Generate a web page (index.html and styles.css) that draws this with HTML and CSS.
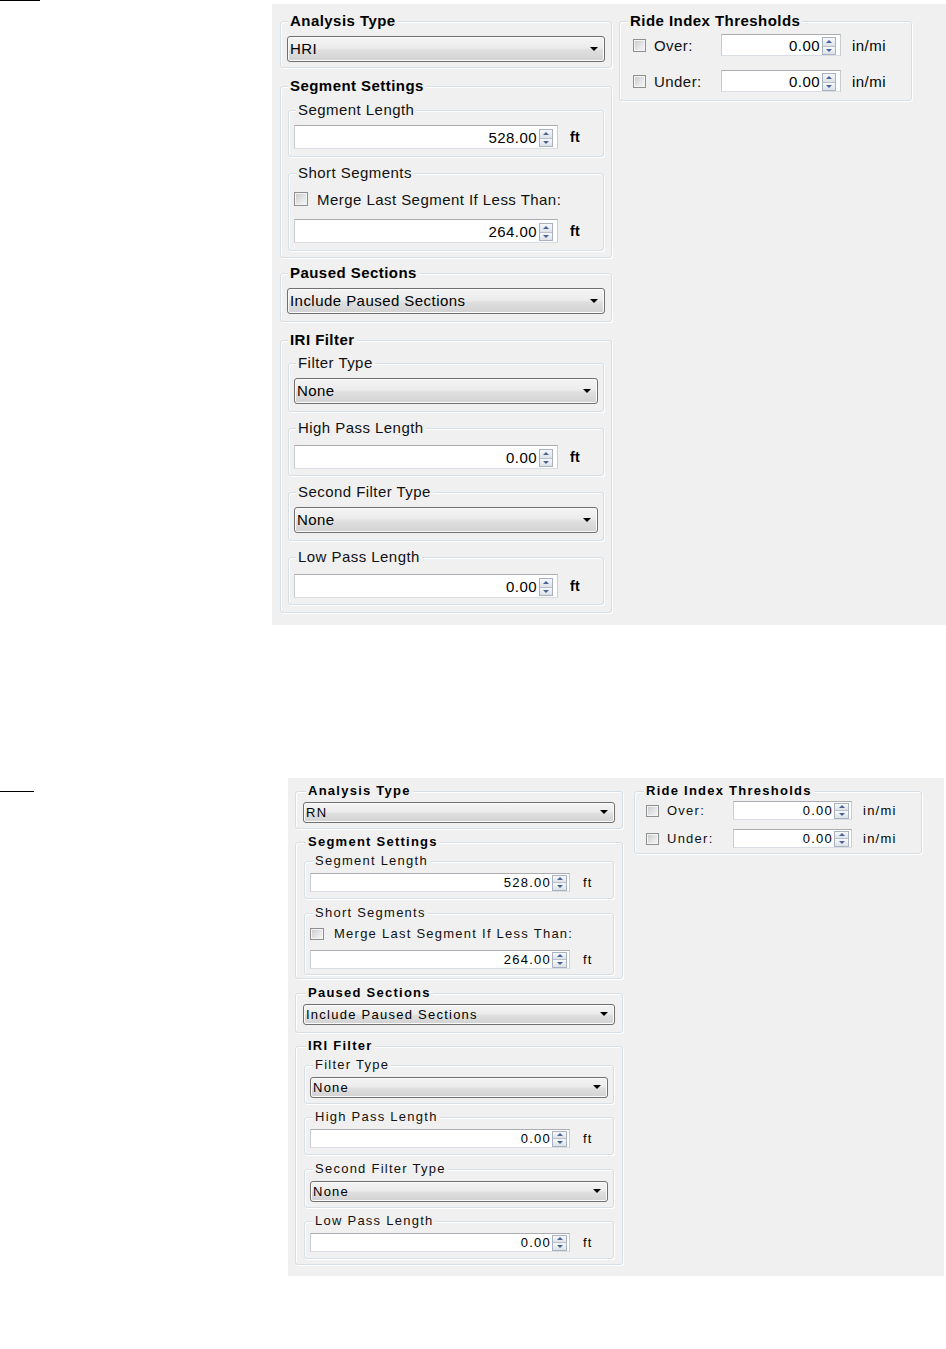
FILE: index.html
```html
<!DOCTYPE html>
<html>
<head>
<meta charset="utf-8">
<title>Analysis Settings</title>
<link rel="stylesheet" href="styles.css">
</head>
<body>

<div class="fig fig-a">
  <div class="rule"></div>
  <div class="panel">
    <div class="col col-left">
      <fieldset class="grp grp-analysis">
        <legend class="lg lg-bold">Analysis Type</legend>
        <div class="combo"><span class="combo-text">HRI</span><span class="caret"></span></div>
      </fieldset>

      <fieldset class="grp grp-segment">
        <legend class="lg lg-bold">Segment Settings</legend>
        <fieldset class="sub sub-num">
          <legend class="lg">Segment Length</legend>
          <div class="numrow">
            <div class="num"><span class="num-val">528.00</span><span class="spin"><span class="sb up"></span><span class="sb dn"></span></span></div>
            <span class="unit">ft</span>
          </div>
        </fieldset>
        <fieldset class="sub sub-short">
          <legend class="lg">Short Segments</legend>
          <div class="chkrow"><span class="box"></span><span class="chk-label">Merge Last Segment If Less Than:</span></div>
          <div class="numrow">
            <div class="num"><span class="num-val">264.00</span><span class="spin"><span class="sb up"></span><span class="sb dn"></span></span></div>
            <span class="unit">ft</span>
          </div>
        </fieldset>
      </fieldset>

      <fieldset class="grp grp-paused">
        <legend class="lg lg-bold">Paused Sections</legend>
        <div class="combo"><span class="combo-text">Include Paused Sections</span><span class="caret"></span></div>
      </fieldset>

      <fieldset class="grp grp-iri">
        <legend class="lg lg-bold">IRI Filter</legend>
        <fieldset class="sub sub-combo">
          <legend class="lg">Filter Type</legend>
          <div class="combo"><span class="combo-text">None</span><span class="caret"></span></div>
        </fieldset>
        <fieldset class="sub sub-num">
          <legend class="lg">High Pass Length</legend>
          <div class="numrow">
            <div class="num"><span class="num-val">0.00</span><span class="spin"><span class="sb up"></span><span class="sb dn"></span></span></div>
            <span class="unit">ft</span>
          </div>
        </fieldset>
        <fieldset class="sub sub-combo">
          <legend class="lg">Second Filter Type</legend>
          <div class="combo"><span class="combo-text">None</span><span class="caret"></span></div>
        </fieldset>
        <fieldset class="sub sub-num">
          <legend class="lg">Low Pass Length</legend>
          <div class="numrow">
            <div class="num"><span class="num-val">0.00</span><span class="spin"><span class="sb up"></span><span class="sb dn"></span></span></div>
            <span class="unit">ft</span>
          </div>
        </fieldset>
      </fieldset>
    </div>

    <div class="col col-right">
      <fieldset class="grp grp-ride">
        <legend class="lg lg-bold">Ride Index Thresholds</legend>
        <div class="trow">
          <span class="box"></span><span class="tlabel">Over:</span>
          <div class="num num-t"><span class="num-val">0.00</span><span class="spin"><span class="sb up"></span><span class="sb dn"></span></span></div>
          <span class="unit unit-t">in/mi</span>
        </div>
        <div class="trow">
          <span class="box"></span><span class="tlabel">Under:</span>
          <div class="num num-t"><span class="num-val">0.00</span><span class="spin"><span class="sb up"></span><span class="sb dn"></span></span></div>
          <span class="unit unit-t">in/mi</span>
        </div>
      </fieldset>
    </div>
  </div>
</div>

<div class="fig fig-b">
  <div class="rule"></div>
  <div class="panel">
    <div class="col col-left">
      <fieldset class="grp grp-analysis">
        <legend class="lg lg-bold">Analysis Type</legend>
        <div class="combo"><span class="combo-text">RN</span><span class="caret"></span></div>
      </fieldset>

      <fieldset class="grp grp-segment">
        <legend class="lg lg-bold">Segment Settings</legend>
        <fieldset class="sub sub-num sub-seglen">
          <legend class="lg">Segment Length</legend>
          <div class="numrow">
            <div class="num"><span class="num-val">528.00</span><span class="spin"><span class="sb up"></span><span class="sb dn"></span></span></div>
            <span class="unit">ft</span>
          </div>
        </fieldset>
        <fieldset class="sub sub-short">
          <legend class="lg">Short Segments</legend>
          <div class="chkrow"><span class="box"></span><span class="chk-label">Merge Last Segment If Less Than:</span></div>
          <div class="numrow">
            <div class="num"><span class="num-val">264.00</span><span class="spin"><span class="sb up"></span><span class="sb dn"></span></span></div>
            <span class="unit">ft</span>
          </div>
        </fieldset>
      </fieldset>

      <fieldset class="grp grp-paused">
        <legend class="lg lg-bold">Paused Sections</legend>
        <div class="combo"><span class="combo-text">Include Paused Sections</span><span class="caret"></span></div>
      </fieldset>

      <fieldset class="grp grp-iri">
        <legend class="lg lg-bold">IRI Filter</legend>
        <fieldset class="sub sub-combo">
          <legend class="lg">Filter Type</legend>
          <div class="combo"><span class="combo-text">None</span><span class="caret"></span></div>
        </fieldset>
        <fieldset class="sub sub-num">
          <legend class="lg">High Pass Length</legend>
          <div class="numrow">
            <div class="num"><span class="num-val">0.00</span><span class="spin"><span class="sb up"></span><span class="sb dn"></span></span></div>
            <span class="unit">ft</span>
          </div>
        </fieldset>
        <fieldset class="sub sub-combo">
          <legend class="lg">Second Filter Type</legend>
          <div class="combo"><span class="combo-text">None</span><span class="caret"></span></div>
        </fieldset>
        <fieldset class="sub sub-num">
          <legend class="lg">Low Pass Length</legend>
          <div class="numrow">
            <div class="num"><span class="num-val">0.00</span><span class="spin"><span class="sb up"></span><span class="sb dn"></span></span></div>
            <span class="unit">ft</span>
          </div>
        </fieldset>
      </fieldset>
    </div>

    <div class="col col-right">
      <fieldset class="grp grp-ride">
        <legend class="lg lg-bold">Ride Index Thresholds</legend>
        <div class="trow">
          <span class="box"></span><span class="tlabel">Over:</span>
          <div class="num num-t"><span class="num-val">0.00</span><span class="spin"><span class="sb up"></span><span class="sb dn"></span></span></div>
          <span class="unit unit-t">in/mi</span>
        </div>
        <div class="trow">
          <span class="box"></span><span class="tlabel">Under:</span>
          <div class="num num-t"><span class="num-val">0.00</span><span class="spin"><span class="sb up"></span><span class="sb dn"></span></span></div>
          <span class="unit unit-t">in/mi</span>
        </div>
      </fieldset>
    </div>
  </div>
</div>

</body>
</html>
```

FILE: styles.css
```css
* { box-sizing: border-box; }

html, body {
  margin: 0;
  padding: 0;
  background: #ffffff;
}

body {
  font-family: "Liberation Sans", Arial, sans-serif;
  color: #000;
}

/* ---------- figures ---------- */
.fig {
  display: flex;
  align-items: flex-start;
}

.rule {
  flex: none;
  height: 1px;
  background: #000;
}

.fig-a .rule { width: 40px; }

.fig-b { margin-top: 153px; }
.fig-b .rule { width: 34px; margin-top: 13px; }

/* ---------- panel ---------- */
.panel {
  flex: none;
  display: flex;
  align-items: flex-start;
  background: #f0f0f0;
}

.fig-a .panel {
  margin-left: 232px;
  margin-top: 4px;
  width: 674px;
  height: 621px;
  padding: 8px 0 0 8px;
  gap: 7px;
  --fs: 15px;
  --ls: 0.45px;
  --lh: 18px;
  --combo-h: 26px;
  --num-h: 24px;
}

.fig-b .panel {
  margin-left: 254px;
  width: 656px;
  height: 498px;
  padding: 6px 0 0 7px;
  gap: 11px;
  --fs: 13px;
  --ls: 1.25px;
  --lh: 14px;
  --combo-h: 21px;
  --num-h: 19px;
}

.col { flex: none; }
.fig-a .col-left { width: 332px; }
.fig-a .col-right { width: 293px; }
.fig-b .col-left { width: 328px; }
.fig-b .col-right { width: 288px; }

/* ---------- group boxes ---------- */
.grp, .sub {
  min-width: 0;
  margin: 0;
  border: 1px solid #d5dfe5;
  border-radius: 3px;
  box-shadow: inset 1px 1px 0 #ffffff, 1px 1px 0 #ffffff;
}

.lg {
  padding: 0 2px;
  font-size: var(--fs);
  letter-spacing: var(--ls);
  line-height: var(--lh);
  font-weight: normal;
  color: #111;
  background: #f0f0f0;
  white-space: nowrap;
}

.lg-bold { font-weight: bold; color: #000; }

/* top panel metrics */
.fig-a .grp { padding: 6px 6px 5px; margin-bottom: 9px; }
.fig-a .grp .lg { margin-left: 1px; }
.fig-a .sub { padding: 6px 5px 7px; margin: 0 1px 7px; }
.fig-a .sub .lg { margin-left: 2px; }
.fig-a .sub:last-child { margin-bottom: 0; }
.fig-a .grp-segment { padding-bottom: 6px; margin-bottom: 6px; }
.fig-a .grp-paused { padding-bottom: 7px; }
.fig-a .grp-iri { padding-top: 5px; padding-bottom: 7px; }
.fig-a .grp-iri .sub-combo { padding-bottom: 7px; }
.fig-a .grp-iri .sub-num { padding-top: 8px; padding-bottom: 6px; }
.fig-a .grp-ride { padding: 4px 6px 8px; }
.fig-a .grp-ride .lg { margin-left: 2px; }

/* bottom panel metrics */
.fig-b .grp { padding: 4px 7px 5px; margin-bottom: 6px; }
.fig-b .grp .lg { margin-left: 3px; }
.fig-b .sub { padding: 5px 5px 5px; margin: 0 1px 6px; }
.fig-b .sub .lg { margin-left: 3px; }
.fig-b .sub:last-child { margin-bottom: 0; }
.fig-b .sub-seglen { padding-bottom: 6px; margin-bottom: 7px; }
.fig-b .grp-segment { padding-top: 5px; padding-bottom: 3px; margin-bottom: 7px; }
.fig-b .grp-paused { padding-bottom: 7px; margin-bottom: 6px; }
.fig-b .grp-iri { padding-top: 5px; padding-bottom: 5px; }
.fig-b .grp-iri .sub-num { margin-bottom: 7px; padding-bottom: 6px; }
.fig-b .grp-iri .sub-num:last-child { margin-bottom: 0; }
.fig-b .grp-ride { padding: 3px 6px 5px; }
.fig-b .grp-ride .lg { margin-left: 3px; }

/* ---------- combo box ---------- */
.combo {
  display: flex;
  align-items: center;
  height: var(--combo-h);
  padding: 0 6px 1px 2px;
  border: 1px solid #707070;
  border-radius: 3px;
  background: linear-gradient(#f4f4f4 0%, #ececec 45%, #dfdfdf 55%, #d2d2d2 100%);
  box-shadow: inset 0 0 0 1px #fbfbfb;
}

.combo-text {
  font-size: var(--fs);
  letter-spacing: var(--ls);
  color: #000;
  white-space: nowrap;
}

.caret {
  margin-left: auto;
  width: 0;
  height: 0;
  border-left: 4px solid transparent;
  border-right: 4px solid transparent;
  border-top: 4px solid #000;
}

/* ---------- numeric up/down ---------- */
.numrow {
  display: flex;
  align-items: center;
}

.num {
  flex: none;
  display: flex;
  align-items: center;
  justify-content: flex-end;
  height: var(--num-h);
  background: #fff;
  border: 1px solid #abadb3;
  border-color: #abadb3 #c9ccd3 #d9dde4 #c9ccd3;
}

.num-val {
  font-size: var(--fs);
  letter-spacing: var(--ls);
  color: #000;
  white-space: nowrap;
}

.spin {
  flex: none;
  display: flex;
  flex-direction: column;
  border: 1px solid #a8b2c0;
  background: #e8ebef;
}

.sb {
  flex: 1;
  display: flex;
  align-items: center;
  justify-content: center;
  background: linear-gradient(#f7f8fa, #dde2e8);
}

.sb + .sb { border-top: 1px solid #b8c0cb; }

.sb::after {
  content: "";
  width: 0;
  height: 0;
  border-left: 3px solid transparent;
  border-right: 3px solid transparent;
}

.up::after { border-bottom: 3px solid #4a6396; }
.dn::after { border-top: 3px solid #4a6396; }

.unit {
  font-size: var(--fs);
  letter-spacing: var(--ls);
  color: #000;
}

/* top panel numeric sizing */
.fig-a .num { width: 264px; padding-right: 4px; }
.fig-a .num-val { margin-right: 2px; }
.fig-a .spin { width: 14px; height: 18px; margin-top: 2px; }
.fig-a .unit { margin-left: 12px; font-weight: bold; font-size: 14px; }
.fig-a .num-t { width: 120px; height: 22px; }
.fig-a .unit-t { margin-left: 11px; font-weight: normal; font-size: 15px; }

/* bottom panel numeric sizing */
.fig-b .num { width: 260px; padding-right: 2px; }
.fig-b .num-val { margin-right: 1px; }
.fig-b .spin { width: 15px; height: 16px; }
.fig-b .unit { margin-left: 13px; }
.fig-b .num-t { width: 119px; height: 19px; }
.fig-b .unit-t { margin-left: 11px; }

/* ---------- checkboxes ---------- */
.box {
  flex: none;
  display: block;
  width: 13px;
  height: 13px;
  border: 1px solid #8e8f8f;
  background: linear-gradient(135deg, #c5c7ca 0%, #e6e7e9 60%, #f6f6f6 100%);
  box-shadow: inset 0 0 0 1px #f4f4f4;
}

.chkrow {
  display: flex;
  align-items: center;
}

.chk-label {
  font-size: var(--fs);
  letter-spacing: var(--ls);
  color: #111;
  white-space: nowrap;
}

.fig-a .chkrow { height: 22px; margin: 0 0 9px; }
.fig-a .chkrow .box { width: 14px; height: 14px; margin-right: 9px; }

.fig-b .chkrow { height: 17px; margin: 0 0 8px; }
.fig-b .chkrow .box { width: 14px; height: 12px; margin-right: 10px; }

/* ---------- ride thresholds rows ---------- */
.trow {
  display: flex;
  align-items: center;
}

.tlabel {
  flex: none;
  font-size: var(--fs);
  letter-spacing: var(--ls);
  color: #111;
}

.fig-a .trow { padding-left: 7px; }
.fig-a .trow + .trow { margin-top: 14px; }
.fig-a .trow .box { margin-right: 8px; }
.fig-a .tlabel { width: 67px; }

.fig-b .trow { padding-left: 5px; }
.fig-b .trow + .trow { margin-top: 9px; }
.fig-b .trow .box { width: 13px; height: 12px; margin-right: 8px; }
.fig-b .tlabel { width: 66px; }
```
